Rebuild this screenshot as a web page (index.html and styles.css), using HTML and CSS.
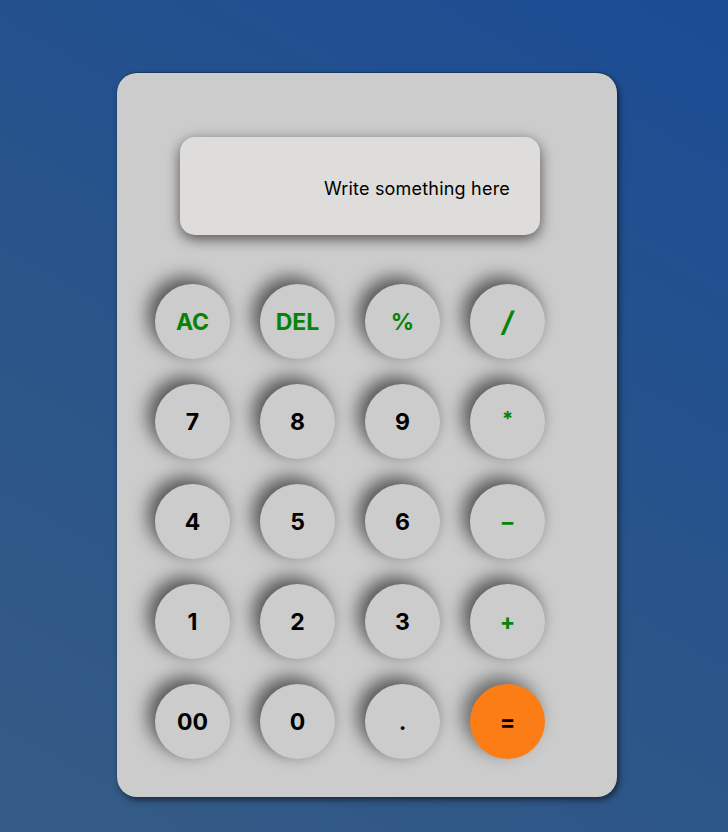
FILE: index.html
```html
<!DOCTYPE html>
<html lang="en">
<head>
<meta charset="utf-8">
<title>Calculator</title>
<link rel="stylesheet" href="styles.css">
</head>
<body>
<main class="calculator">
  <div class="display">Write something here</div>
  <div class="keys">
    <button class="key op">AC</button>
    <button class="key op">DEL</button>
    <button class="key op">%</button>
    <button class="key op slash">/</button>
    <button class="key">7</button>
    <button class="key">8</button>
    <button class="key">9</button>
    <button class="key op star">*</button>
    <button class="key">4</button>
    <button class="key">5</button>
    <button class="key">6</button>
    <button class="key op">–</button>
    <button class="key">1</button>
    <button class="key">2</button>
    <button class="key">3</button>
    <button class="key op">+</button>
    <button class="key">00</button>
    <button class="key">0</button>
    <button class="key">.</button>
    <button class="key equal">=</button>
  </div>
</main>
</body>
</html>
```
FILE: styles.css
```css
* { box-sizing: border-box; }
html, body { height: 100%; }
body {
  margin: 0;
  padding-top: 73px;
  background: linear-gradient(30deg, #365b86 0%, #2a5589 45%, #1b4c94 100%);
  font-family: "Inter", "Noto Sans", sans-serif;
}
.calculator {
  width: 500px;
  height: 724px;
  margin-left: 117px;
  background: #cbcccb;
  border-radius: 20px;
  padding: 64px 0 0 38px;
  box-shadow: 2px 3px 6px rgba(0,0,0,0.55), 0 -1px 1px rgba(0,0,0,0.25);
}
.display {
  width: 360px;
  height: 98px;
  margin-left: 25px;
  background: #dedddb;
  border-radius: 15px;
  box-shadow: 0 4px 14px rgba(0,0,0,0.6);
  display: flex;
  align-items: center;
  justify-content: flex-end;
  padding: 4px 30px 0 0;
  font-size: 18px;
  letter-spacing: 0.2px;
  color: #000;
}
.keys {
  margin-top: 49px;
  display: grid;
  grid-template-columns: repeat(4, 75px);
  grid-auto-rows: 75px;
  column-gap: 30px;
  row-gap: 25px;
}
.key {
  width: 75px;
  height: 75px;
  border: none;
  border-radius: 50%;
  background: #cbcccb;
  font-family: "Inter", "Noto Sans", sans-serif;
  font-weight: 700;
  font-size: 23px;
  color: #000;
  padding: 0;
  box-shadow: -7px -7px 18px rgba(0,0,0,0.6), 3px 3px 8px rgba(0,0,0,0.05);
}
.op { color: #078307; }
.slash { font-size: 28px; font-style: italic; }
.star { font-size: 20px; padding-bottom: 6px; }
.equal { background: #fc7d15; box-shadow: -7px -7px 18px rgba(0,0,0,0.5); }
```
